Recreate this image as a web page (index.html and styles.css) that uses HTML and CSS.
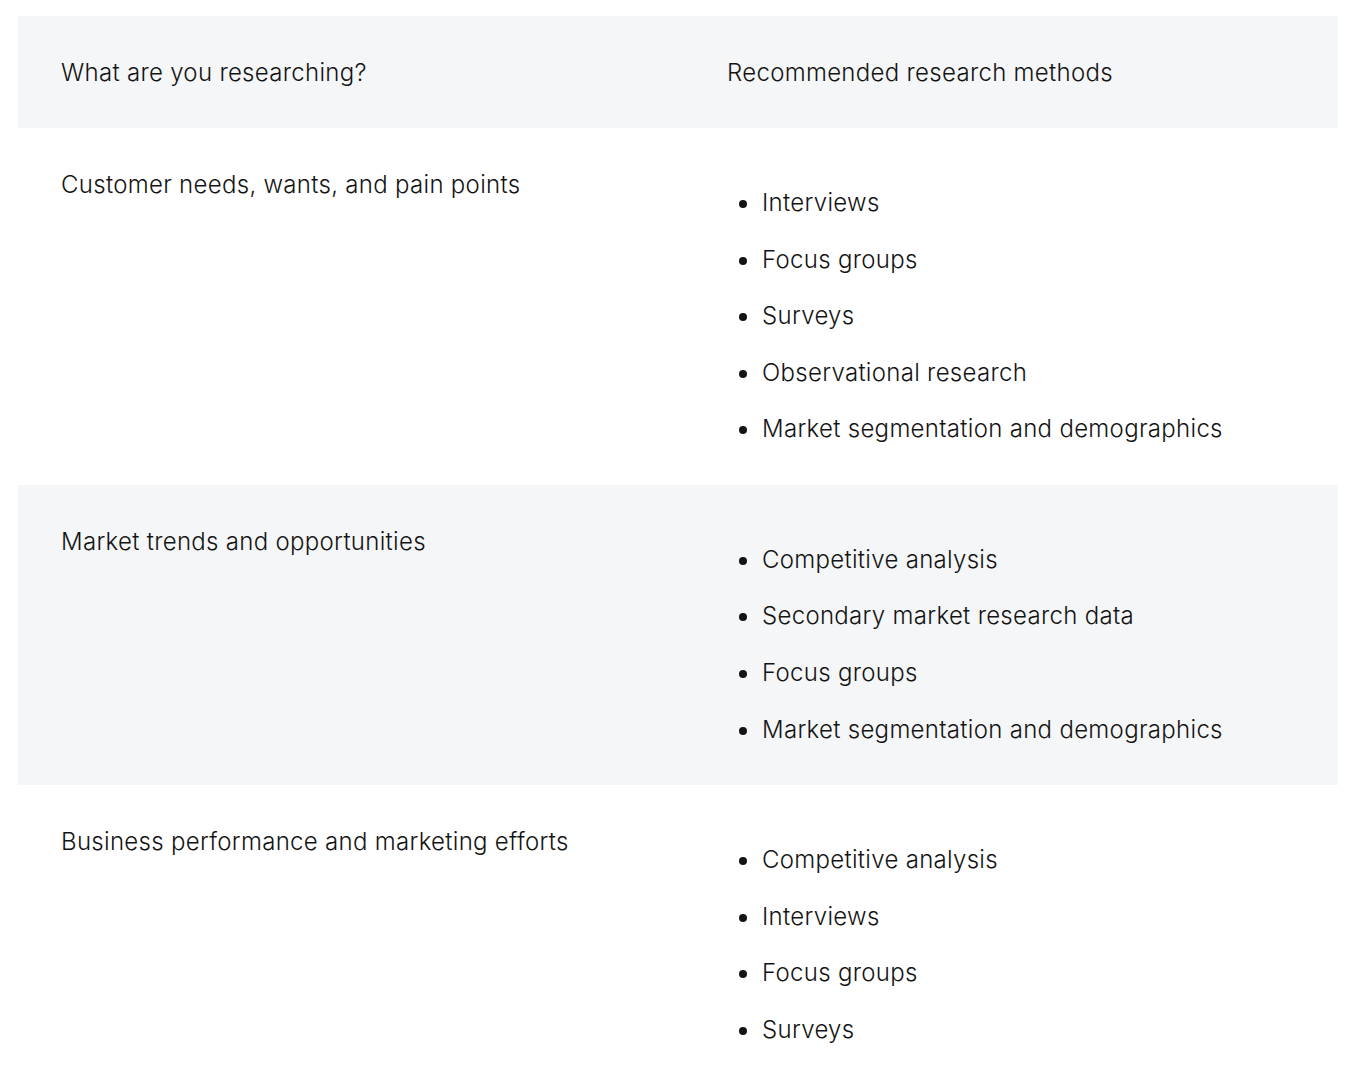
FILE: index.html
```html
<!DOCTYPE html>
<html lang="en">
<head>
<meta charset="utf-8">
<title>Research methods</title>
<link rel="stylesheet" href="styles.css">
</head>
<body>
<div class="page">
  <table class="methods">
    <thead>
      <tr class="shaded">
        <th class="col-topic">What are you researching?</th>
        <th class="col-methods">Recommended research methods</th>
      </tr>
    </thead>
    <tbody>
      <tr>
        <td>Customer needs, wants, and pain points</td>
        <td>
          <ul class="list">
            <li>Interviews</li>
            <li>Focus groups</li>
            <li>Surveys</li>
            <li>Observational research</li>
            <li>Market segmentation and demographics</li>
          </ul>
        </td>
      </tr>
      <tr class="shaded">
        <td>Market trends and opportunities</td>
        <td>
          <ul class="list">
            <li>Competitive analysis</li>
            <li>Secondary market research data</li>
            <li>Focus groups</li>
            <li>Market segmentation and demographics</li>
          </ul>
        </td>
      </tr>
      <tr>
        <td>Business performance and marketing efforts</td>
        <td>
          <ul class="list">
            <li>Competitive analysis</li>
            <li>Interviews</li>
            <li>Focus groups</li>
            <li>Surveys</li>
          </ul>
        </td>
      </tr>
    </tbody>
  </table>
</div>
</body>
</html>
```
FILE: styles.css
```css
html, body {
  margin: 0;
  padding: 0;
  background: #ffffff;
}
.page {
  padding: 16px 15px 0 18px;
  font-family: Inter, "Noto Sans", sans-serif;
  color: #141414;
}
.methods {
  width: 1320px;
  border-collapse: collapse;
  table-layout: fixed;
}
.col-topic {
  width: 580px;
}
.methods th,
.methods td {
  text-align: left;
  vertical-align: top;
  font-weight: 300;
  font-size: 24px;
  line-height: 32px;
  letter-spacing: 0.3px;
  padding: 41px 43px 39.5px;
}
.methods th {
  padding-bottom: 39px;
}
.shaded {
  background: #f5f6f7;
}
.list {
  margin: 18px 0 0 0;
  padding: 0 0 0 34px;
  list-style: disc;
}
.list li {
  padding-left: 1px;
}
.list li + li {
  margin-top: 24.6px;
}
```
